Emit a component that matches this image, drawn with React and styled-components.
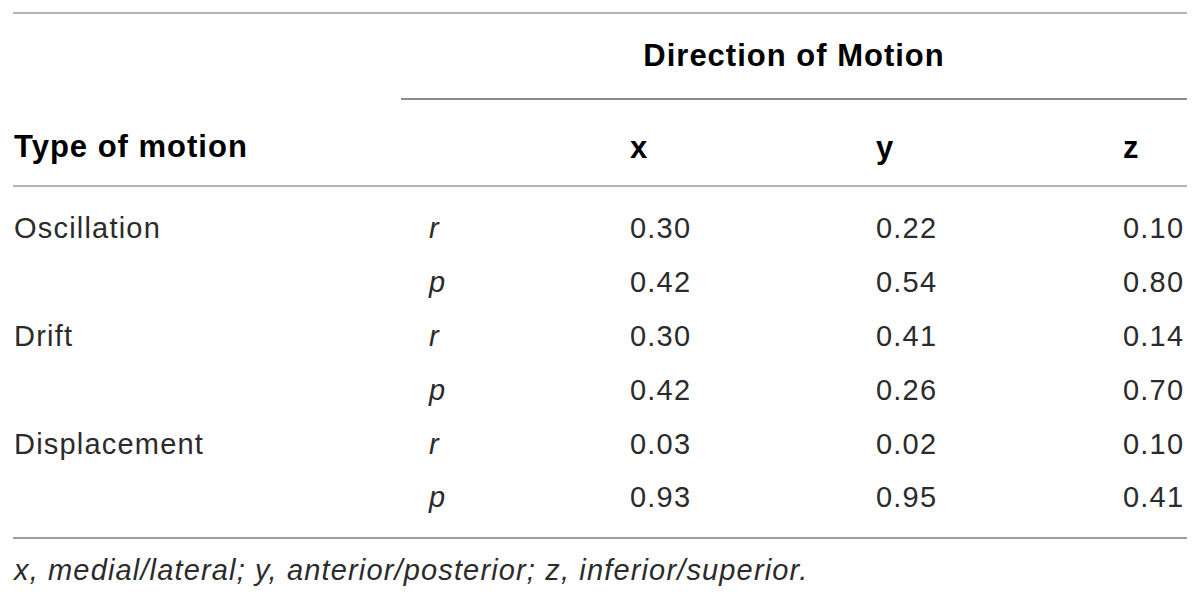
import React from 'react'
import styled, { createGlobalStyle } from 'styled-components'

const GlobalStyle = createGlobalStyle`
  html, body {
    margin: 0;
    padding: 0;
    background: #ffffff;
  }
  body {
    font-family: 'Liberation Sans', Arial, sans-serif;
    color: #111;
  }
`

const Page = styled.div`
  width: 1200px;
  height: 600px;
  padding: 12px 0 0 13px;
  box-sizing: border-box;
  overflow: hidden;
`

const Table = styled.table`
  width: 1174px;
  border-collapse: collapse;
  table-layout: fixed;
  border-top: 2px solid #b4b4b4;
  border-bottom: 2px solid #9c9c9c;
`

const HeadRow = styled.tr`
  height: ${(p) => p.h}px;
`

const HeadCell = styled.th`
  padding: ${(p) => p.pt || 0}px 0 ${(p) => p.pb || 0}px ${(p) => (p.first ? 1 : p.center ? 0 : 28)}px;
  text-align: ${(p) => (p.center ? 'center' : 'left')};
  vertical-align: middle;
  font-size: 31px;
  font-weight: 700;
  letter-spacing: 1px;
  color: #000;
  border-bottom: ${(p) => (p.rule ? `2px solid ${p.rule}` : 'none')};
`

const Cell = styled.td`
  padding: ${(p) => (p.top ? 15 : 0)}px 0 ${(p) => (p.bottom ? 13 : 0)}px
    ${(p) => (p.first ? 1 : 28)}px;
  vertical-align: middle;
  font-size: 29px;
  font-weight: 400;
  font-style: ${(p) => (p.italic ? 'italic' : 'normal')};
  letter-spacing: 1.2px;
  white-space: nowrap;
  color: #2b2b2b;
`

const Footnote = styled.p`
  margin: 15px 0 0 1px;
  font-size: 29px;
  font-style: italic;
  letter-spacing: 1.15px;
  color: #2b2b2b;
`

const rows = [
  { type: 'Oscillation', stat: 'r', values: ['0.30', '0.22', '0.10'] },
  { type: '', stat: 'p', values: ['0.42', '0.54', '0.80'] },
  { type: 'Drift', stat: 'r', values: ['0.30', '0.41', '0.14'] },
  { type: '', stat: 'p', values: ['0.42', '0.26', '0.70'] },
  { type: 'Displacement', stat: 'r', values: ['0.03', '0.02', '0.10'] },
  { type: '', stat: 'p', values: ['0.93', '0.95', '0.41'] },
]

export default function App() {
  return (
    <>
      <GlobalStyle />
      <Page>
        <Table>
          <colgroup>
            <col style={{ width: 388 }} />
            <col style={{ width: 201 }} />
            <col style={{ width: 246 }} />
            <col style={{ width: 247 }} />
            <col style={{ width: 92 }} />
          </colgroup>
          <thead>
            <HeadRow h={86}>
              <HeadCell first />
              <HeadCell colSpan={4} center rule="#8c8c8c">
                Direction of Motion
              </HeadCell>
            </HeadRow>
            <HeadRow h={87}>
              <HeadCell first pt={10} rule="#b4b4b4">Type of motion</HeadCell>
              <HeadCell pt={10} rule="#b4b4b4" />
              <HeadCell pt={10} rule="#b4b4b4">x</HeadCell>
              <HeadCell pt={10} rule="#b4b4b4">y</HeadCell>
              <HeadCell pt={10} rule="#b4b4b4">z</HeadCell>
            </HeadRow>
          </thead>
          <tbody>
            {rows.map((r, i) => {
              const top = i === 0
              const bottom = i === rows.length - 1
              return (
                <tr key={i} style={{ height: 54 + (top ? 15 : 0) + (bottom ? 13 : 0) }}>
                  <Cell first top={top} bottom={bottom}>{r.type}</Cell>
                  <Cell italic top={top} bottom={bottom}>{r.stat}</Cell>
                  {r.values.map((v, j) => (
                    <Cell key={j} top={top} bottom={bottom}>{v}</Cell>
                  ))}
                </tr>
              )
            })}
          </tbody>
        </Table>
        <Footnote>x, medial/lateral; y, anterior/posterior; z, inferior/superior.</Footnote>
      </Page>
    </>
  )
}
